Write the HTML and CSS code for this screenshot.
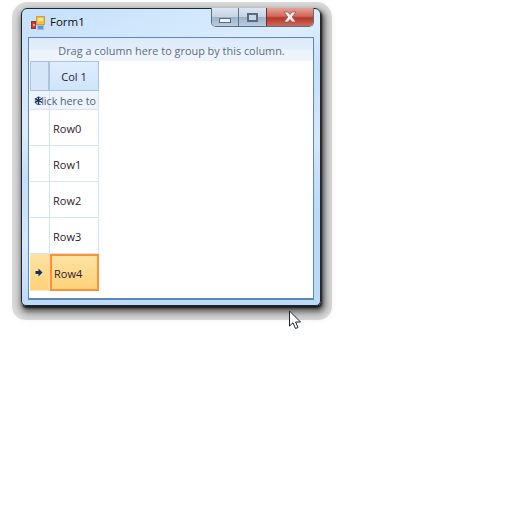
FILE: index.html
```html
<!DOCTYPE html>
<html lang="en">
<head>
    <meta charset="UTF-8">
    <title>Form1</title>
    <link rel="stylesheet" href="styles.css">
</head>
<body>
    <div class="window">
        <div class="titlebar">
            <svg class="app-icon" width="14" height="14" viewBox="0 0 14 14">
                <rect x="5.500" y="0.500" width="8" height="8" fill="#fbc02d" stroke="#b8a070"/>
                <rect x="7" y="2" width="5" height="3" fill="#ffe680"/>
                <rect x="0.500" y="5.500" width="4" height="7" fill="#d83a2a" stroke="#8a3a32"/>
                <rect x="2" y="8" width="2" height="2" fill="#f2a090"/>
                <rect x="6.500" y="9.500" width="6" height="4" fill="#5a94dc" stroke="#a8bcd4"/>
            </svg>
            <span class="title">Form1</span>
            <div class="controls">
                <div class="ctl ctl-min"><span class="min-glyph"></span></div>
                <div class="ctl ctl-max"><span class="max-glyph"></span></div>
                <div class="ctl ctl-close">
                    <svg width="18" height="12" viewBox="0 0 18 12">
                        <path d="M3 1h4l2 2.500L11 1h4L11.200 6 15 11h-4L9 8.500 7 11H3l3.800-5z" fill="#f4efef" stroke="#8a4a48" stroke-width="0.700"/>
                    </svg>
                </div>
            </div>
        </div>
        <div class="client">
            <div class="group-panel">Drag a column here to group by this column.</div>
            <div class="grid">
                <div class="cell corner"></div>
                <div class="cell col-head">Col 1</div>

                <div class="cell new-ind"></div>
                <div class="cell new-row">
                    <span class="new-text">Click here to</span>
                    <svg class="star" width="9" height="9" viewBox="0 0 9 9">
                        <path d="M4.500 0.500v8M0.800 2.500l7.400 4M0.800 6.500l7.400-4" stroke="#14305c" stroke-width="1.400"/>
                    </svg>
                </div>

                <div class="cell ind"></div><div class="cell row">Row0</div>
                <div class="cell ind"></div><div class="cell row">Row1</div>
                <div class="cell ind"></div><div class="cell row">Row2</div>
                <div class="cell ind"></div><div class="cell row">Row3</div>

                <div class="cell ind current">
                    <svg width="8" height="9" viewBox="0 0 8 9">
                        <path d="M3.500 0.500L7.500 4.500L3.500 8.500V6H0.500V3H3.500z" fill="#14305c"/>
                    </svg>
                </div>
                <div class="cell row selected">Row4</div>
            </div>
        </div>
    </div>

    <svg class="cursor" width="14" height="20" viewBox="0 0 14 20">
        <path d="M1.500 1V16L5 12.800L7.500 18.500L10 17.500L7.600 12H12.500z" fill="#fff" stroke="#1c2430" stroke-width="1"/>
    </svg>
</body>
</html>
```

FILE: styles.css
```css
* {
    margin: 0;
    padding: 0;
    box-sizing: border-box;
}
body {
    font-family: "Open Sans", "Noto Sans", sans-serif;
    font-size: 11px;
    background-color: #fff;
    width: 519px;
    height: 525px;
    overflow: hidden;
    position: relative;
    padding: 8px 0 0 21px;
}
.window {
    width: 300px;
    height: 298px;
    border: 1px solid #20262c;
    border-radius: 6px 6px 5px 5px;
    background: linear-gradient(160deg, #c4e0fb 0%, #dcedfd 30%, #c4dffb 42%, #d4e8fc 58%, #bcdafa 75%, #bcdafa 100%);
    box-shadow: 1px 2px 2px 0 #1c1c1c, 2px 4px 5px 1px rgba(0, 0, 0, 0.5), 2px 5px 8px 5px rgba(0, 0, 0, 0.22), 1px 4px 0 10px #dedede;
    padding: 0 6px 6px;
    display: flex;
    flex-direction: column;
}
.titlebar {
    height: 28px;
    display: flex;
    align-items: center;
    position: relative;
    flex-shrink: 0;
}
.app-icon {
    margin: -1px 0 0 3px;
}
.title {
    margin: -3px 0 0 5px;
    font-size: 11.500px;
    color: #0a0a0a;
}
.controls {
    position: absolute;
    top: -1px;
    right: 0;
    display: flex;
    height: 19px;
    border: 1px solid #5c6f88;
    border-top: none;
    border-radius: 0 0 5px 5px;
    overflow: hidden;
}
.ctl {
    display: flex;
    align-items: center;
    justify-content: center;
    background: linear-gradient(#dbe6f1 0%, #c6d4e3 48%, #9db1c8 52%, #bccde0 100%);
}
.ctl-min {
    width: 27px;
    border-right: 1px solid #5c6f88;
}
.ctl-max {
    width: 27px;
}
.ctl-close {
    width: 47px;
    border-left: 1px solid #7a2a22;
    background: linear-gradient(#e5a298 0%, #cf6a5c 45%, #b8352a 55%, #cc6a5a 100%);
}
.min-glyph {
    display: block;
    width: 12px;
    height: 5px;
    margin-top: 6px;
    background: #eef3f8;
    border: 1px solid #5a6b80;
}
.max-glyph {
    display: block;
    width: 11px;
    height: 9px;
    background: #c8d6e4;
    border: 2px solid #5a6b80;
}
.client {
    height: 263px;
    background-color: #fff;
    border: 1px solid #5f86b5;
    border-bottom-width: 2px;
    flex-shrink: 0;
}
.group-panel {
    height: 23px;
    padding: 5px 0 0 1px;
    text-align: center;
    font-size: 10.900px;
    color: #5d6b80;
    background: linear-gradient(#dceafa 0%, #e3eefb 50%, #edf4fc 55%, #edf4fc 100%);
}
.grid {
    display: grid;
    grid-template-columns: 20px 49px;
    grid-template-rows: 30px 19px 36px 36px 36px 36px 37px;
    width: 70px;
    margin-left: 1px;
}
.cell {
    display: flex;
    align-items: center;
    border-right: 1px solid #d5e4f5;
    border-bottom: 1px solid #d5e4f5;
}
.corner {
    background: #d5e6f9;
    border-color: #a9c3e0;
    border-left: 1px solid #a9c3e0;
    border-top: 1px solid #a9c3e0;
    border-right-width: 2px;
}
.col-head {
    background: linear-gradient(#e0eefd, #cfe4fb);
    border-color: #a9c3e0;
    border-top: 1px solid #a9c3e0;
    justify-content: center;
    color: #17233a;
    padding-top: 1px;
}
.new-ind {
    background: #edf4fc;
}
.new-row {
    background: #edf4fc;
    color: #4f5f78;
    white-space: nowrap;
    position: relative;
}
/* text runs back over the indicator column, as in the real grid */
.new-text {
    position: absolute;
    right: 2px;
    top: 3px;
    font-size: 10.700px;
}
.star {
    position: absolute;
    left: -16px;
    top: 5px;
}
.ind {
    background: #fff;
    justify-content: center;
}
.row {
    padding: 1px 0 0 3px;
    color: #2a1a2a;
}
.current {
    background: linear-gradient(#fee3a4, #fed27a);
    border-right: 2px solid #fed9a0;
    border-bottom: 1px solid #fbe6bd;
}
.selected {
    background: linear-gradient(#fee3a4 0%, #fed27a 100%);
    border: 2px solid #fb9234;
    padding-left: 2px;
}
.cursor {
    position: absolute;
    left: 288px;
    top: 310px;
}
```
